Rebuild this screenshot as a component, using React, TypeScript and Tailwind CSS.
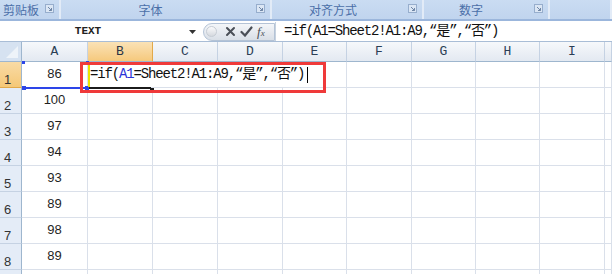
import React from 'react'

const cols = ['A', 'B', 'C', 'D', 'E', 'F', 'G', 'H', 'I', 'J']
const values = ['86', '100', '97', '94', '93', '89', '98', '89', '']

const mono = "font-['Liberation_Mono','Noto_Sans_CJK_SC',monospace]"
const cjk = "font-['Noto_Sans_CJK_SC','Noto_Sans',sans-serif]"

function Launcher() {
  return (
    <svg width="9" height="9" viewBox="0 0 9 9" className="mr-[5px] mt-[-2px] shrink-0">
      <rect x="0.5" y="0.5" width="8" height="8" fill="#dbe6f4" stroke="#97aecd" />
      <path d="M3 3 L6.5 6.5 M6.5 4 V6.5 H4" stroke="#6f86a6" strokeWidth="1" fill="none" />
    </svg>
  )
}

function Group({ label, width, pr, first }: { label: string; width?: string; pr?: string; first?: boolean }) {
  return (
    <div className={`flex h-full items-center border-r-2 border-[#e2ebf7] ${width ?? 'flex-1'}`}>
      <span
        className={`flex-1 text-[12px] leading-none text-[#4b6fa8] ${cjk} ${first ? 'pl-[3px] text-left' : `text-center ${pr}`}`}
      >
        {label}
      </span>
      {label && <Launcher />}
    </div>
  )
}

function FormulaText({ colored }: { colored?: boolean }) {
  return (
    <span className={`${mono} whitespace-nowrap text-[14px] tracking-[-1.15px] text-[#111]`}>
      =if(<span className={colored ? 'text-[#2b33d8]' : ''}>A1</span>=Sheet2!A1:A9,“是”,“否”)
    </span>
  )
}

export default function App() {
  return (
    <div className="h-[274px] w-[612px] overflow-hidden bg-white">
      {/* ribbon group labels */}
      <div className="flex h-[19px] bg-gradient-to-b from-[#cadcf2] to-[#c0d4ee]">
        <Group label="剪贴板" width="w-[61px]" first />
        <Group label="字体" width="w-[211px]" pr="pr-[16px]" />
        <Group label="对齐方式" width="w-[152px]" pr="pr-[14px]" />
        <Group label="数字" width="w-[126px]" pr="pr-[16px]" />
        <Group label="" />
      </div>
      <div className="h-[2px] bg-[#9bb6dc]" />

      {/* formula bar */}
      <div className="flex h-[21px] items-center border-b border-[#a9bdd6] bg-white pt-[1px]">
        <div className="flex h-full w-[203px] items-center">
          <span className={`${mono} w-[176px] text-center text-[11px] font-bold text-[#222]`}>TEXT</span>
          <svg width="7" height="4" viewBox="0 0 7 4" className="ml-[13px]">
            <path d="M0 0 H7 L3.5 4 Z" fill="#333" />
          </svg>
        </div>
        <div className="flex h-[18px] w-[72px] items-center rounded-l-full border border-[#b4c3d6] bg-gradient-to-b from-[#f4f6f9] to-[#d9dfe7]">
          <span className="ml-[2px] h-[11px] w-[11px] rounded-full border border-[#c6ccd4] bg-gradient-to-b from-[#fbfbfc] to-[#d5d9df]" />
          <svg width="11" height="11" viewBox="0 0 11 11" className="ml-[8px]">
            <path d="M2 2 L9 9 M9 2 L2 9" stroke="#4a4f57" strokeWidth="2" strokeLinecap="round" />
          </svg>
          <svg width="13" height="11" viewBox="0 0 13 11" className="ml-[4px]">
            <path d="M1.5 6 L5 9.5 L11.5 1.5" stroke="#4a4f57" strokeWidth="2.2" fill="none" strokeLinecap="round" />
          </svg>
          <span className="ml-[4px] font-['Liberation_Serif',serif] text-[13px] italic leading-none text-[#4a4f57]">
            f<span className="text-[9px]">x</span>
          </span>
        </div>
        <div className="flex h-full flex-1 items-center border-l border-[#c7d2df] pl-[8px]">
          <FormulaText />
        </div>
      </div>

      {/* sheet */}
      <div className="relative">
        <div className="grid grid-cols-[22px_66px_65px_65px_65px_64px_65px_64px_64px_65px_1fr]">
          {/* header row */}
          <div className="relative h-[20px] border-b border-r border-[#9eb6ce] bg-[#d6e2f1]">
            <svg width="12" height="12" viewBox="0 0 12 12" className="absolute bottom-[3px] right-[3px]">
              <path d="M12 0 V12 H0 Z" fill="#eef3f9" />
            </svg>
          </div>
          {cols.map((c) => (
            <div
              key={c}
              className={`flex h-[20px] items-center justify-center border-b border-r pt-[1px] ${mono} text-[13px] ${
                c === 'B'
                  ? 'border-[#e2a94a] bg-gradient-to-b from-[#fae2b6] to-[#f6c97c] text-[#2b3446]'
                  : 'border-[#c5d2e3] bg-gradient-to-b from-[#f6f8fb] to-[#e3e9f1] text-[#2b3e55]'
              } border-b-[#9eb6ce]`}
            >
              {c === 'J' ? '' : c}
            </div>
          ))}

          {/* rows */}
          {values.map((v, r) => (
            <React.Fragment key={r}>
              <div
                className={`flex h-[26px] items-end border-b border-r border-r-[#9eb6ce] pb-[1px] pl-[4px] font-['Liberation_Sans',sans-serif] text-[13px] leading-none text-[#333] ${
                  r === 0 ? 'border-b-[#e2a94a] bg-gradient-to-b from-[#f9dba5] to-[#f5c877]' : 'border-b-[#c5d2e3] bg-[#e4ecf7]'
                }`}
              >
                {r < 8 ? r + 1 : ''}
              </div>
              {cols.map((c) => (
                <div
                  key={c}
                  className="flex h-[26px] items-center justify-center border-b border-r border-[#dae0ea] pb-[2px] font-['Liberation_Sans',sans-serif] text-[13px] text-[#1f1f1f]"
                >
                  {c === 'A' ? v : ''}
                </div>
              ))}
            </React.Fragment>
          ))}
        </div>

        {/* A1 selection */}
        <div className="absolute left-[22px] top-[45px] h-[2px] w-[66px] bg-[#2d45e8]" />
        <div className="absolute left-[22px] top-[19px] h-[3px] w-[3px] bg-[#2d45e8]" />
        <div className="absolute left-[86px] top-[19px] h-[3px] w-[3px] bg-[#2d45e8]" />
        <div className="absolute left-[22px] top-[44px] h-[4px] w-[4px] bg-[#2d45e8]" />
        <div className="absolute left-[85px] top-[44px] h-[4px] w-[4px] bg-[#2d45e8]" />

        {/* B1 in edit mode */}
        <div className="absolute left-[89px] top-[20px] flex h-[25px] w-[236px] items-center bg-white pl-[1px]">
          <FormulaText colored />
          <span className="ml-[3px] h-[16px] w-px bg-black" />
        </div>
        <div className="absolute left-[88px] top-[20px] h-[25px] w-[2px] bg-[#ece400]" />
        <div className="absolute left-[89px] top-[45px] h-[2px] w-[62px] bg-[#1b1b1b]" />
        <div className="absolute left-[150px] top-[46px] h-[3px] w-[4px] bg-[#1b1b1b]" />

        {/* highlight box */}
        <div className="absolute left-[80px] top-[20px] h-[31px] w-[246px] border-[3px] border-[#ef3a3a]" />
      </div>
    </div>
  )
}
